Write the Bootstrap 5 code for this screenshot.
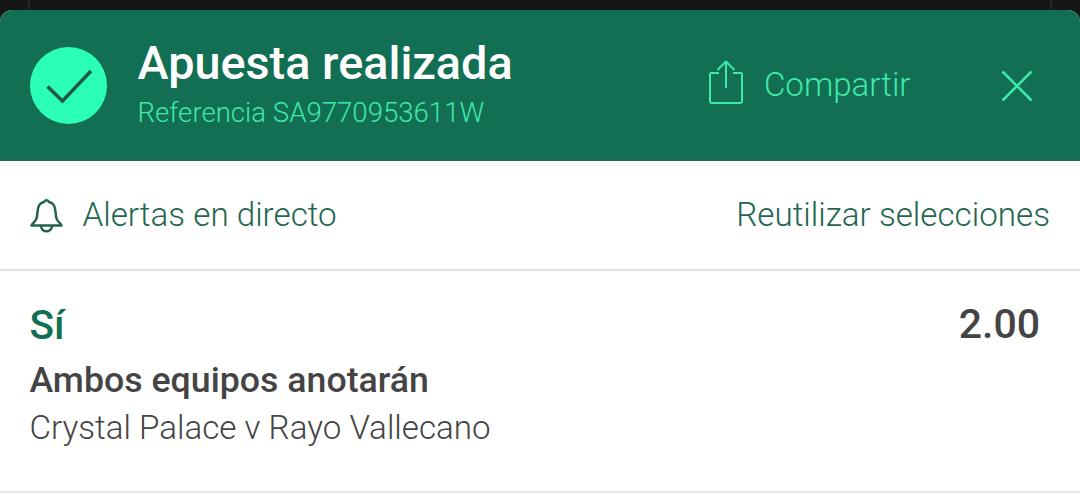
<!DOCTYPE html>
<html lang="es">
<head>
<meta charset="utf-8">
<title>Apuesta realizada</title>
<link href="https://cdn.jsdelivr.net/npm/bootstrap@5.3.0/dist/css/bootstrap.min.css" rel="stylesheet">
<style>
html,body{height:499px;overflow:hidden;background:#161616;font-family:Roboto,sans-serif}
.topstrip{height:10px;border-left:2px solid #262626;border-right:2px solid #262626;margin:0 28px}
.sheet{background:#fff;height:489px;border-radius:12px 12px 0 0;overflow:hidden}
.headbar{background:#126f53;height:151px;padding:0 47px 0 30px}
.okdisc{width:77px;height:77px;border-radius:50%;background:#2bffb5;flex:none}
.titlewrap{margin-left:30.500px;margin-top:-2px}
.betitle{font-size:46.800px;font-weight:500;line-height:52px;color:#fff;margin-top:-4px}
.betref{font-size:27.600px;font-weight:300;line-height:30px;color:#3fe8ab;margin-top:9px}
.shareicon{margin-top:-7px}
.sharetxt{font-size:33.100px;font-weight:300;color:#3fe8ab;line-height:40px;margin-left:20.500px;margin-right:90.500px;margin-top:-2px}
.alertrow{height:110px;border-bottom:2px solid #e2e2e2;padding:0 30px;color:#1f6650;font-size:33.200px;font-weight:300}
.alertlabel{margin-left:19.500px}
.selrow{height:222px;border-bottom:2px solid #e2e2e2;padding:30px 40px 0 29.500px;color:#444}
.selname{font-size:40.500px;font-weight:500;color:#126f53;line-height:46px;margin-top:1px;margin-bottom:-1px}
.selodds{font-size:41px;font-weight:500;line-height:46px}
.selmarket{font-size:35.700px;font-weight:500;line-height:42px;margin-top:12px}
.selmatch{font-size:33.170px;font-weight:300;line-height:42px;margin-top:6px}
</style>
</head>
<body>
<div class="topstrip"></div>
<div class="sheet">
  <div class="headbar d-flex align-items-center">
    <div class="okdisc d-flex align-items-center justify-content-center">
      <svg width="46" height="36" viewBox="0 0 46 36" fill="none" stroke="#22584a" stroke-width="3.500"><path d="M1.500 18.500 16.500 33 45 3"/></svg>
    </div>
    <div class="titlewrap flex-grow-1">
      <div class="betitle">Apuesta realizada</div>
      <div class="betref">Referencia SA9770953611W</div>
    </div>
    <svg class="shareicon" width="34" height="44" viewBox="0 0 34 44" fill="none" stroke="#3fe8ab" stroke-width="2" stroke-linejoin="round"><path d="M10 13H2a1 1 0 0 0-1 1v27a2 2 0 0 0 2 2h28a2 2 0 0 0 2-2V14a1 1 0 0 0-1-1h-8M17 28V2M8.500 10 17 1.500 25.500 10"/></svg>
    <div class="sharetxt">Compartir</div>
    <svg width="32" height="32" viewBox="0 0 32 32" fill="none" stroke="#3fe8ab" stroke-width="2.500"><path d="M1.500 1.500 30.500 30.500M30.500 1.500 1.500 30.500"/></svg>
  </div>
  <div class="alertrow d-flex align-items-center justify-content-between">
    <div class="d-flex align-items-center">
      <svg width="33" height="36" viewBox="0 0 33 36" fill="none" stroke="#22624f" stroke-width="2.500" stroke-linejoin="round"><path d="M1.500 28.500h30c-.5-2.500-4-3.500-5-7-1.200-4.500-.5-9-2.500-13-1.500-3-4-3-5-3.500-1-2.500-4-2.500-5 0-1 .5-3.500.5-5 3.500-2 4-1.300 8.500-2.500 13-1 3.500-4.500 4.500-5 7ZM11 29c.5 7 10.500 7 11 0"/></svg>
      <span class="alertlabel">Alertas en directo</span>
    </div>
    <span>Reutilizar selecciones</span>
  </div>
  <div class="selrow">
    <div class="d-flex justify-content-between">
      <div class="selname">Sí</div>
      <div class="selodds">2.00</div>
    </div>
    <div class="selmarket">Ambos equipos anotarán</div>
    <div class="selmatch">Crystal Palace v Rayo Vallecano</div>
  </div>
</div>
</body>
</html>
